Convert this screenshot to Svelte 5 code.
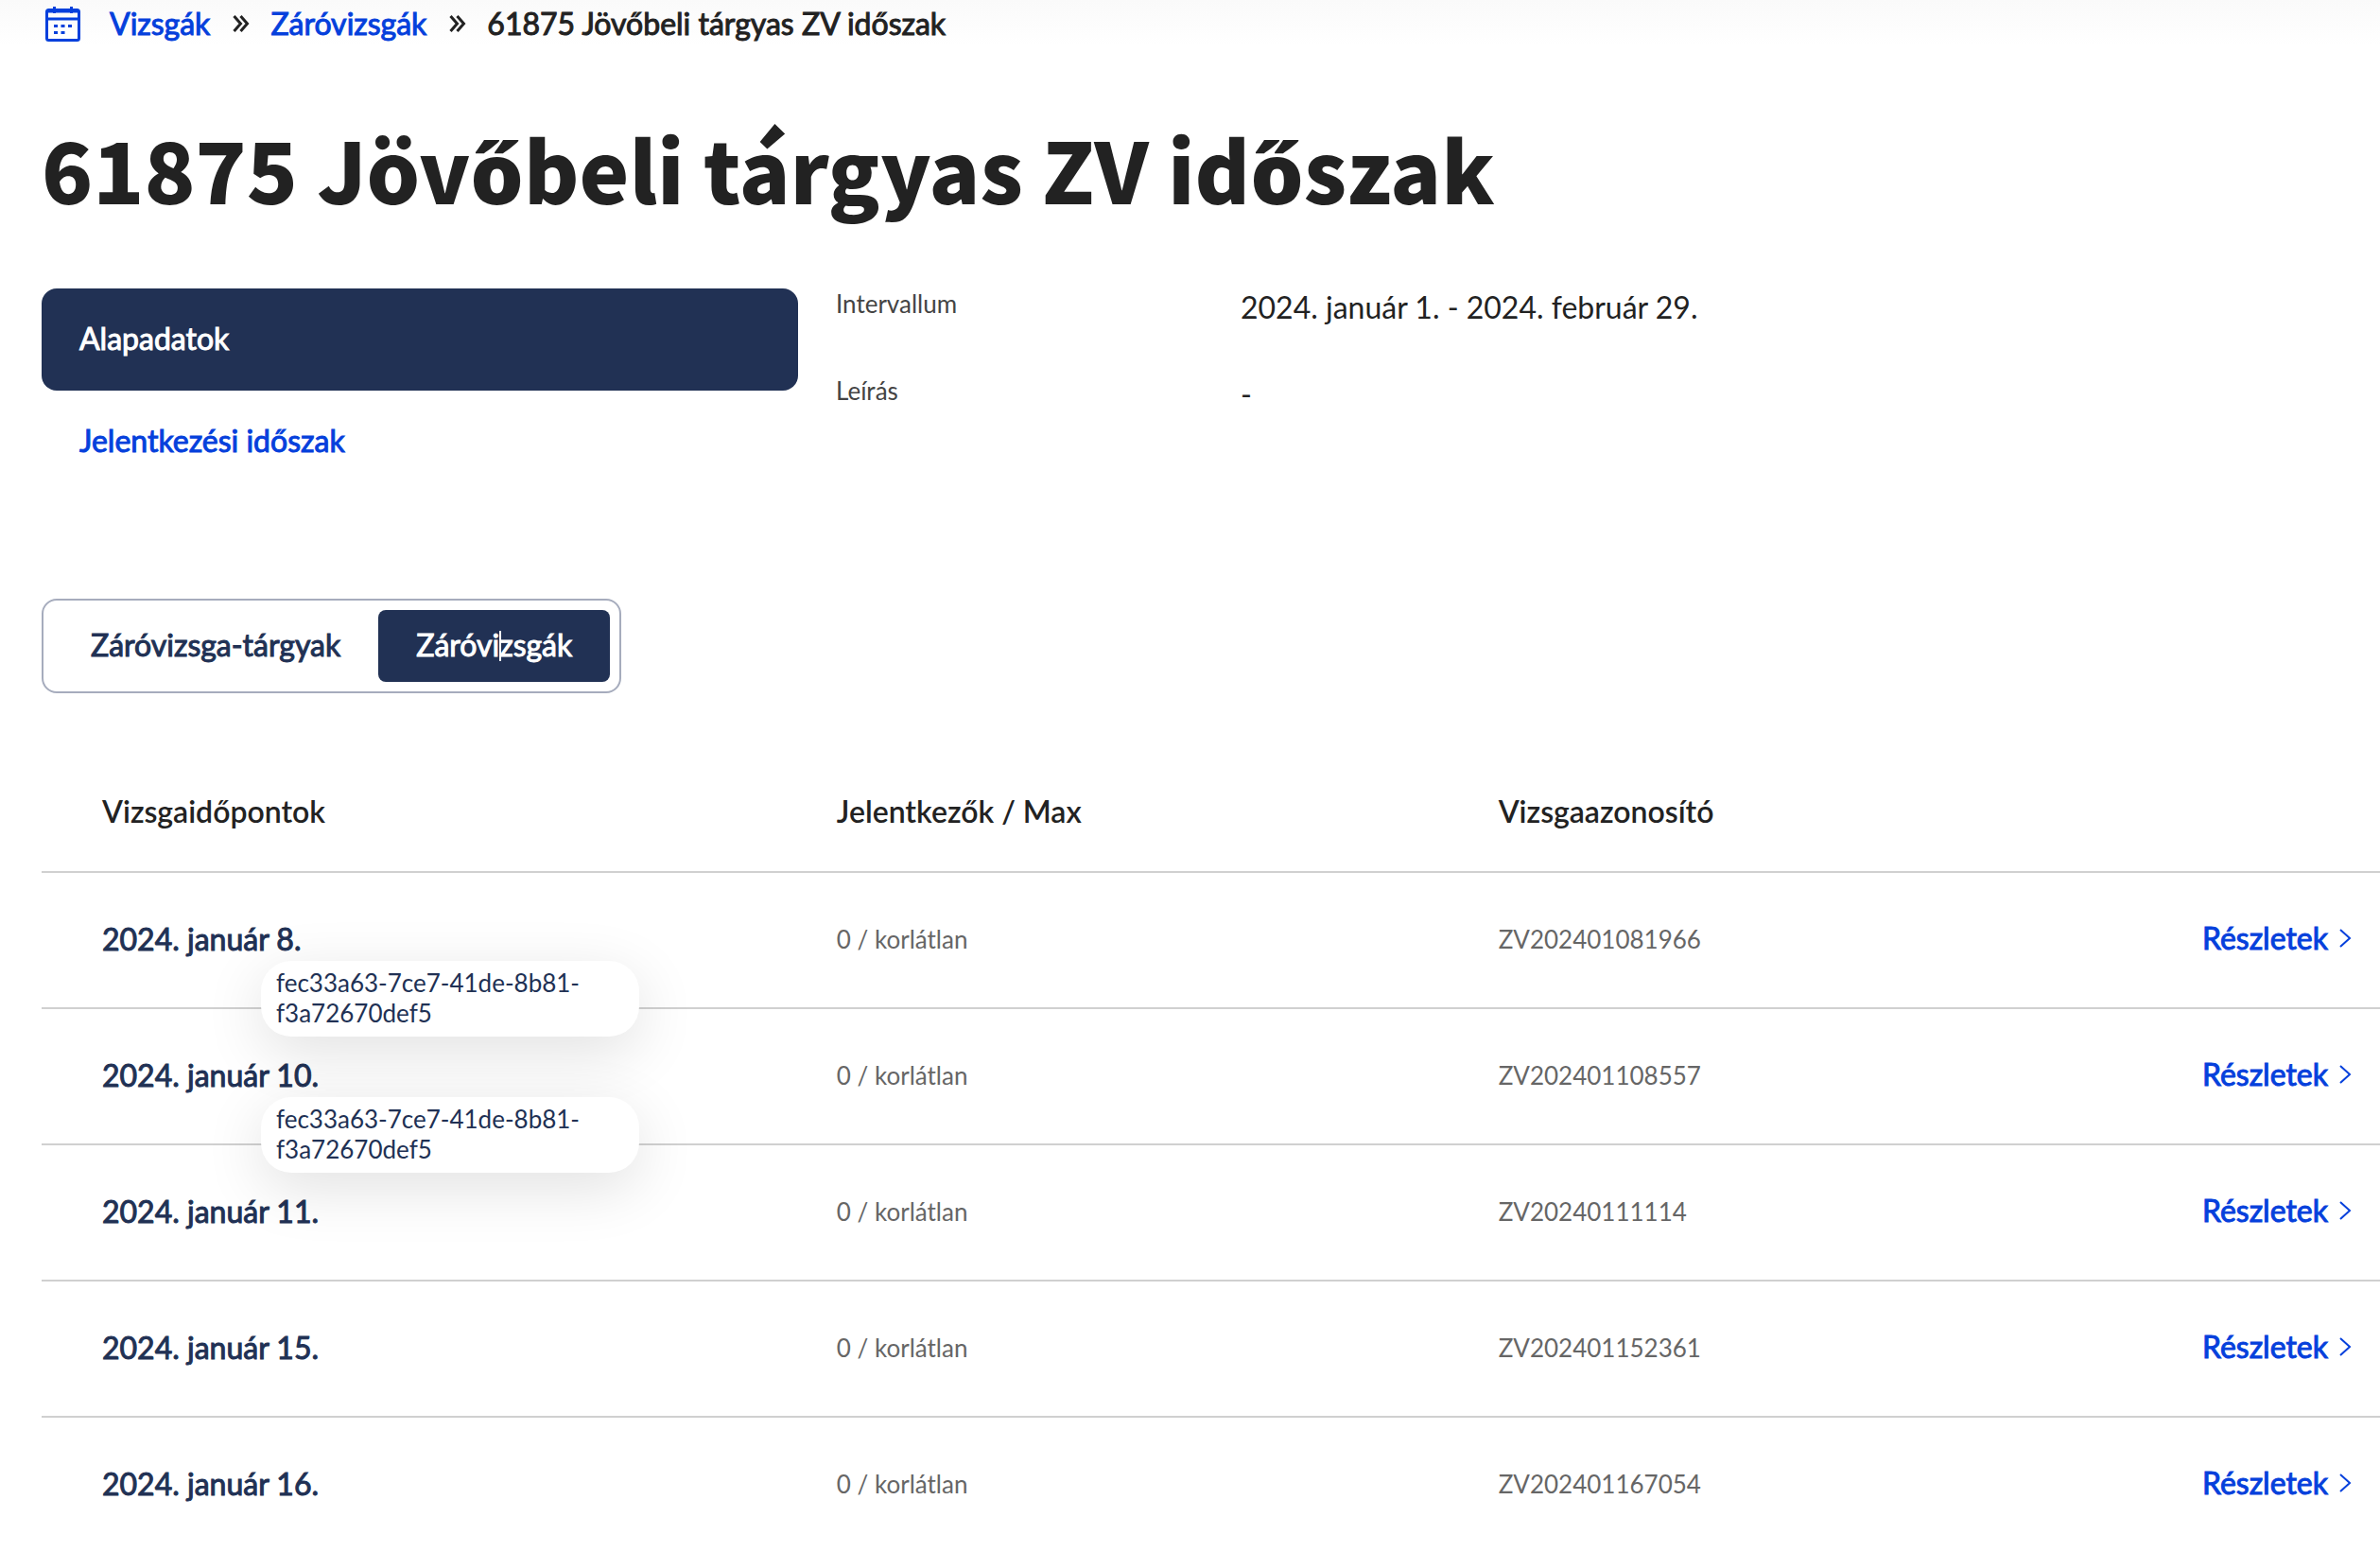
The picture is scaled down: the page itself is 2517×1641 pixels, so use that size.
<script>
    const title = "61875 Jövőbeli tárgyas ZV időszak";

    let tab = $state("exams");

    const exams = [
        { date: "2024. január 8.", code: "ZV202401081966", tip: true },
        { date: "2024. január 10.", code: "ZV202401108557", tip: true },
        { date: "2024. január 11.", code: "ZV20240111114" },
        { date: "2024. január 15.", code: "ZV202401152361" },
        { date: "2024. január 16.", code: "ZV202401167054" },
    ];
    const tooltip = "fec33a63-7ce7-41de-8b81-f3a72670def5";
</script>

{#snippet separator()}
    <svg class="separator" width="18" height="20" viewBox="0 0 18 20" aria-hidden="true">
        <path d="M1.500 2l7 8-7 8M8.500 2l7 8-7 8" />
    </svg>
{/snippet}

<div class="page">
    <nav class="breadcrumb" aria-label="Morzsamenü">
        <svg class="calendar" width="38" height="38" viewBox="0 0 38 38" aria-hidden="true">
            <rect x="2.500" y="4.500" width="34" height="32" rx="2" />
            <path d="M2.500 6h34M2.500 14h34M10.500 1v7M28.500 1v7" />
            <path class="dots" d="M10 20h4v3h-4zM17.500 20h4v3h-4zM25 20h4v3h-4zM10 27h4v3h-4zM17.500 27h4v3h-4z" />
        </svg>
        <a href="#vizsgak">Vizsgák</a>
        {@render separator()}
        <a href="#zarovizsgak">Záróvizsgák</a>
        {@render separator()}
        <span class="strong">{title}</span>
    </nav>

    <h1>{title}</h1>

    <div class="details">
        <nav class="menu" aria-label="Időszak">
            <a class="active" href="#alapadatok">Alapadatok</a>
            <a href="#jelentkezes">Jelentkezési időszak</a>
        </nav>
        <dl>
            <dt>Intervallum</dt>
            <dd>2024. január 1. - 2024. február 29.</dd>
            <dt>Leírás</dt>
            <dd>-</dd>
        </dl>
    </div>

    <div class="tabs" role="tablist">
        <button role="tab" aria-selected={tab === "subjects"} onclick={() => (tab = "subjects")}>
            Záróvizsga-tárgyak
        </button>
        <button role="tab" aria-selected={tab === "exams"} onclick={() => (tab = "exams")}>
            Záróvizsgák
            <span class="caret"></span>
        </button>
    </div>

    <table>
        <thead>
            <tr>
                <th class="date">Vizsgaidőpontok</th>
                <th class="count">Jelentkezők / Max</th>
                <th>Vizsgaazonosító</th>
                <td class="more"></td>
            </tr>
        </thead>
        <tbody>
            {#each exams as exam}
                <tr>
                    <td class="date">
                        <div class="anchor">
                            <span class="strong">{exam.date}</span>
                            {#if exam.tip}
                                <div class="tooltip" role="tooltip">{tooltip}</div>
                            {/if}
                        </div>
                    </td>
                    <td>0 / korlátlan</td>
                    <td>{exam.code}</td>
                    <td class="more">
                        <a href="#{exam.code}">
                            Részletek
                            <svg width="13" height="20" viewBox="0 0 13 20" aria-hidden="true">
                                <path d="M1 1l10 9-10 9" />
                            </svg>
                        </a>
                    </td>
                </tr>
            {/each}
        </tbody>
    </table>
</div>

<style>
    :global(body) {
        margin: 0;
        background: #fff;
    }
    .page {
        padding: 0 0 0 44px;
        overflow: hidden;
        color: #222;
        font-family: Lato, sans-serif;
        font-size: 32px;
        line-height: 40px;
        background: linear-gradient(#fafafa, #fff 48px);
    }
    a {
        color: #0540dc;
        text-decoration: none;
    }
    a,
    button,
    .strong {
        font-weight: 400;
        -webkit-text-stroke: 1px currentColor;
    }
    .breadcrumb {
        display: flex;
        align-items: center;
        height: 50px;
    }
    .calendar {
        margin: 0 31px 0 3px;
        fill: none;
        stroke: #0540dc;
        stroke-width: 3;
    }
    .calendar .dots {
        fill: #0540dc;
        stroke: none;
    }
    .separator {
        margin: 0 22px 0 24px;
        fill: none;
        stroke: #222;
        stroke-width: 3;
    }
    h1 {
        margin: 70px 0 69px;
        font-family: "Noto Sans CJK JP", "Noto Sans", sans-serif;
        font-size: 89px;
        font-weight: 900;
        line-height: 116px;
    }
    .details {
        display: grid;
        grid-template-columns: 800px 1fr;
        column-gap: 40px;
    }
    .menu {
        display: flex;
        flex-direction: column;
    }
    .menu a {
        padding: 33px 40px 35px;
        border-radius: 16px;
    }
    .menu .active {
        background: #213154;
        color: #fff;
    }
    dl {
        display: grid;
        grid-template-columns: 428px 1fr;
        row-gap: 52px;
        align-content: start;
        margin: 0;
    }
    dt {
        color: #444;
        font-size: 26px;
        line-height: 32px;
    }
    dd {
        margin: 0;
    }
    .tabs {
        display: flex;
        width: fit-content;
        margin: 112px 0 76px;
        padding: 10px;
        border: 2px solid #a6acbd;
        border-radius: 16px;
    }
    .tabs button {
        position: relative;
        padding: 17px 40px 19px;
        border: 0;
        border-radius: 8px;
        background: none;
        color: #213154;
        font: inherit;
        cursor: pointer;
    }
    .tabs button[aria-selected="true"] {
        background: #213154;
        color: #fff;
    }
    .caret {
        position: absolute;
        top: 22px;
        left: 52%;
        width: 2px;
        height: 32px;
        background: #fff;
    }
    table {
        width: 100%;
        border-collapse: collapse;
        table-layout: fixed;
    }
    th,
    td {
        padding: 0;
        border-bottom: 2px solid #d0d0d0;
        text-align: left;
    }
    thead tr {
        height: 113px;
    }
    th {
        padding-bottom: 14px;
        font-weight: 600;
    }
    td {
        padding-bottom: 2px;
        color: #666;
        font-size: 26px;
    }
    tbody tr {
        height: 144px;
    }
    .date {
        width: 34%;
        padding-left: 64px;
        box-sizing: border-box;
    }
    .count {
        width: 28.3%;
    }
    td.date {
        color: #213154;
        font-size: 32px;
    }
    .anchor {
        position: relative;
    }
    .tooltip {
        position: absolute;
        z-index: 1;
        top: 43px;
        left: 168px;
        box-sizing: border-box;
        width: 400px;
        padding: 7px 16px 9px;
        border-radius: 32px;
        background: #fff;
        box-shadow: 0 16px 64px rgba(0, 0, 0, 0.12);
        font-size: 26px;
        line-height: 32px;
    }
    .more {
        padding-right: 30px;
        text-align: right;
    }
    .more a {
        display: inline-flex;
        align-items: center;
        gap: 12px;
        font-size: 32px;
    }
    .more svg {
        fill: none;
        stroke: #0540dc;
        stroke-width: 2;
    }
</style>
